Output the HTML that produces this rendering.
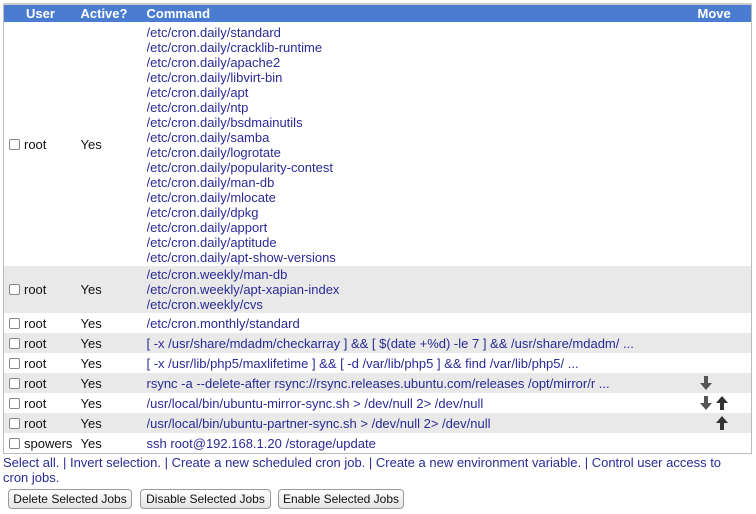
<!DOCTYPE html>
<html><head><style>
body{margin:0;background:#fff;font-family:"Liberation Sans",Arial,sans-serif;font-size:13px;color:#111;width:756px;height:514px;overflow:hidden;position:relative}
table{position:absolute;left:3px;top:3px;width:749px;border-collapse:collapse;border:1px solid #bbb;border-top:2px solid #ccc;table-layout:fixed}
th{background:#4a7dd1;color:#fff;font-weight:bold;text-align:left;height:17px;padding:0;font-size:13px;line-height:17px}
td{padding:0;vertical-align:middle;line-height:15px;white-space:nowrap;overflow:hidden}
tr.g td{background:#e9e9e9}
tr.r td{height:20px}
a{color:#2a2a95;text-decoration:none}
.cmd{padding:1px 0}
.cb{display:inline-block;width:9px;height:9px;border:1px solid #888;border-radius:2px;background:#fff;vertical-align:-1px;margin:0 4px 0 5px}
.links{position:absolute;left:3px;top:455px;width:740px;line-height:15px;color:#2a2a95}
.btn{position:absolute;top:489px;height:18px;border:1px solid #999;border-radius:4px;background:linear-gradient(#fff,#e4e4e4);font-size:12px;line-height:18px;text-align:center;color:#111}
svg{vertical-align:middle;display:inline-block}
</style></head><body>
<table>
<colgroup><col style="width:77px"><col style="width:66px"><col style="width:551px"><col></colgroup>
<tr><th style="padding-left:22px">User</th><th>Active?</th><th>Command</th><th>Move</th></tr>
<tr><td><span class="cb"></span>root</td><td>Yes</td><td class="cmd" style="height:239px;padding-top:3px"><a>/etc/cron.daily/standard<br>/etc/cron.daily/cracklib-runtime<br>/etc/cron.daily/apache2<br>/etc/cron.daily/libvirt-bin<br>/etc/cron.daily/apt<br>/etc/cron.daily/ntp<br>/etc/cron.daily/bsdmainutils<br>/etc/cron.daily/samba<br>/etc/cron.daily/logrotate<br>/etc/cron.daily/popularity-contest<br>/etc/cron.daily/man-db<br>/etc/cron.daily/mlocate<br>/etc/cron.daily/dpkg<br>/etc/cron.daily/apport<br>/etc/cron.daily/aptitude<br>/etc/cron.daily/apt-show-versions</a></td><td></td></tr>
<tr class="g"><td><span class="cb"></span>root</td><td>Yes</td><td class="cmd" style="height:45px"><a>/etc/cron.weekly/man-db<br>/etc/cron.weekly/apt-xapian-index<br>/etc/cron.weekly/cvs</a></td><td></td></tr>
<tr class="r"><td><span class="cb"></span>root</td><td>Yes</td><td><a>/etc/cron.monthly/standard</a></td><td></td></tr>
<tr class="r g"><td><span class="cb"></span>root</td><td>Yes</td><td><a>[ -x /usr/share/mdadm/checkarray ] &amp;&amp; [ $(date +%d) -le 7 ] &amp;&amp; /usr/share/mdadm/ ...</a></td><td></td></tr>
<tr class="r"><td><span class="cb"></span>root</td><td>Yes</td><td><a>[ -x /usr/lib/php5/maxlifetime ] &amp;&amp; [ -d /var/lib/php5 ] &amp;&amp; find /var/lib/php5/ ...</a></td><td></td></tr>
<tr class="r g"><td><span class="cb"></span>root</td><td>Yes</td><td><a>rsync -a --delete-after rsync://rsync.releases.ubuntu.com/releases /opt/mirror/r ...</a></td><td><svg width="16" height="16" viewBox="0 0 16 16" style="margin-left:0"><path d="M6 1h4v7h4l-6 7-6-7h4z" fill="#555"/></svg></td></tr>
<tr class="r"><td><span class="cb"></span>root</td><td>Yes</td><td><a>/usr/local/bin/ubuntu-mirror-sync.sh &gt; /dev/null 2&gt; /dev/null</a></td><td><svg width="16" height="16" viewBox="0 0 16 16"><path d="M6 1h4v7h4l-6 7-6-7h4z" fill="#555"/></svg><svg width="16" height="16" viewBox="0 0 16 16"><path d="M6 15h4V8h4L8 1 2 8h4z" fill="#333"/></svg></td></tr>
<tr class="r g"><td><span class="cb"></span>root</td><td>Yes</td><td><a>/usr/local/bin/ubuntu-partner-sync.sh &gt; /dev/null 2&gt; /dev/null</a></td><td><svg width="16" height="16" viewBox="0 0 16 16" style="margin-left:16px"><path d="M6 15h4V8h4L8 1 2 8h4z" fill="#333"/></svg></td></tr>
<tr class="r"><td><span class="cb"></span>spowers</td><td>Yes</td><td><a>ssh root@192.168.1.20 /storage/update</a></td><td></td></tr>
</table>
<div class="links">Select all. | Invert selection. | Create a new scheduled cron job. | Create a new environment variable. | Control user access to cron jobs.</div>
<div class="btn" style="left:8px;width:122px">Delete Selected Jobs</div>
<div class="btn" style="left:140px;width:129px">Disable Selected Jobs</div>
<div class="btn" style="left:278px;width:124px">Enable Selected Jobs</div>
</body></html>
